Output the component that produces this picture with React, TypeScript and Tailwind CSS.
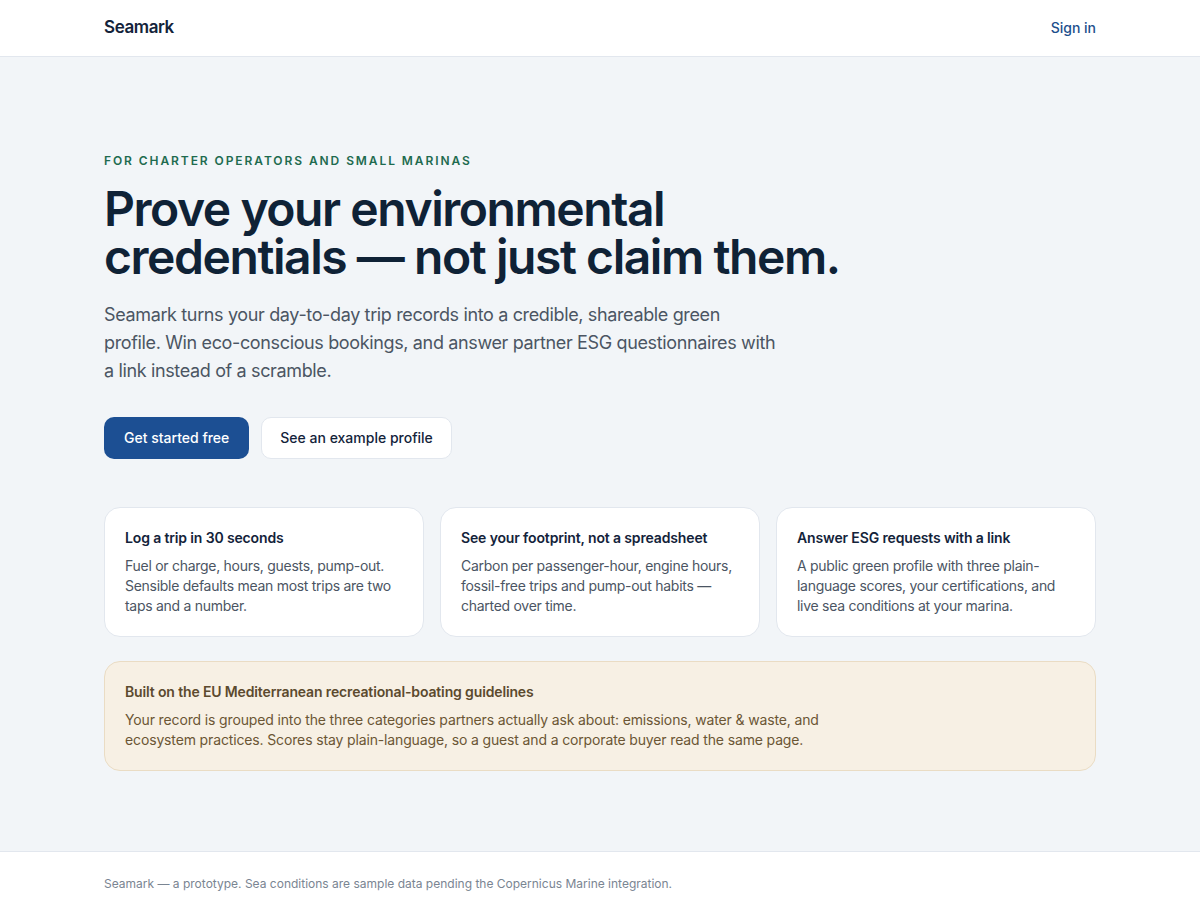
const features = [
  {
    title: "Log a trip in 30 seconds",
    body: "Fuel or charge, hours, guests, pump-out. Sensible defaults mean most trips are two taps and a number.",
  },
  {
    title: "See your footprint, not a spreadsheet",
    body: "Carbon per passenger-hour, engine hours, fossil-free trips and pump-out habits — charted over time.",
  },
  {
    title: "Answer ESG requests with a link",
    body: "A public green profile with three plain-language scores, your certifications, and live sea conditions at your marina.",
  },
];

export default function App() {
  return (
    <div className="min-h-screen bg-[#f2f5f8] font-['Inter',sans-serif] text-[#0f2236]">
      <header className="bg-white border-b border-[#e2e7ee]">
        <div className="max-w-5xl mx-auto px-4 h-14 flex items-center justify-between">
          <span className="text-[17px] font-semibold tracking-tight text-[#13233a]">Seamark</span>
          <a className="text-sm font-medium text-[#1d4f8c]">Sign in</a>
        </div>
      </header>

      <main className="max-w-5xl mx-auto px-4 pt-24 pb-20">
        <p className="text-xs font-semibold uppercase tracking-[0.16em] text-[#1e6b4f]">
          For charter operators and small marinas
        </p>
        <h1 className="mt-4 text-[48px] leading-[48px] font-semibold tracking-[-0.03em] text-[#0f2236]">
          Prove your environmental
          <br />
          credentials — not just claim them.
        </h1>
        <p className="mt-5 max-w-[676px] text-lg leading-7 text-[#4b5563] tracking-[-0.02em]">
          Seamark turns your day-to-day trip records into a credible, shareable green profile. Win
          eco-conscious bookings, and answer partner ESG questionnaires with a link instead of a
          scramble.
        </p>

        <div className="mt-8 flex gap-3">
          <button className="h-[42px] px-5 rounded-[10px] bg-[#1c4f93] text-white text-sm font-medium">
            Get started free
          </button>
          <button className="h-[42px] px-[18px] rounded-[10px] bg-white border border-[#e2e7ee] text-sm font-medium text-[#13233a]">
            See an example profile
          </button>
        </div>

        <div className="mt-12 grid grid-cols-3 gap-4">
          {features.map((f, i) => (
            <div key={i} className="bg-white border border-[#e2e7ee] rounded-2xl p-5">
              <h3 className="text-sm font-semibold text-[#13233a] tracking-[-0.01em]">{f.title}</h3>
              <p className="mt-2 text-sm leading-5 text-[#4b5563] tracking-[-0.02em]">{f.body}</p>
            </div>
          ))}
        </div>

        <div className="mt-6 bg-[#f7f0e4] border border-[#eadcc4] rounded-2xl p-5">
          <h3 className="text-sm font-semibold text-[#5c4a2e] tracking-[-0.01em]">
            Built on the EU Mediterranean recreational-boating guidelines
          </h3>
          <p className="mt-2 max-w-3xl text-sm leading-5 text-[#6b5634] tracking-[-0.01em]">
            Your record is grouped into the three categories partners actually ask about: emissions,
            water &amp; waste, and ecosystem practices. Scores stay plain-language, so a guest and a
            corporate buyer read the same page.
          </p>
        </div>
      </main>

      <footer className="bg-white border-t border-[#e2e7ee]">
        <div className="max-w-5xl mx-auto px-4 py-6">
          <p className="text-xs text-[#7a8592]">
            Seamark — a prototype. Sea conditions are sample data pending the Copernicus Marine
            integration.
          </p>
        </div>
      </footer>
    </div>
  );
}
